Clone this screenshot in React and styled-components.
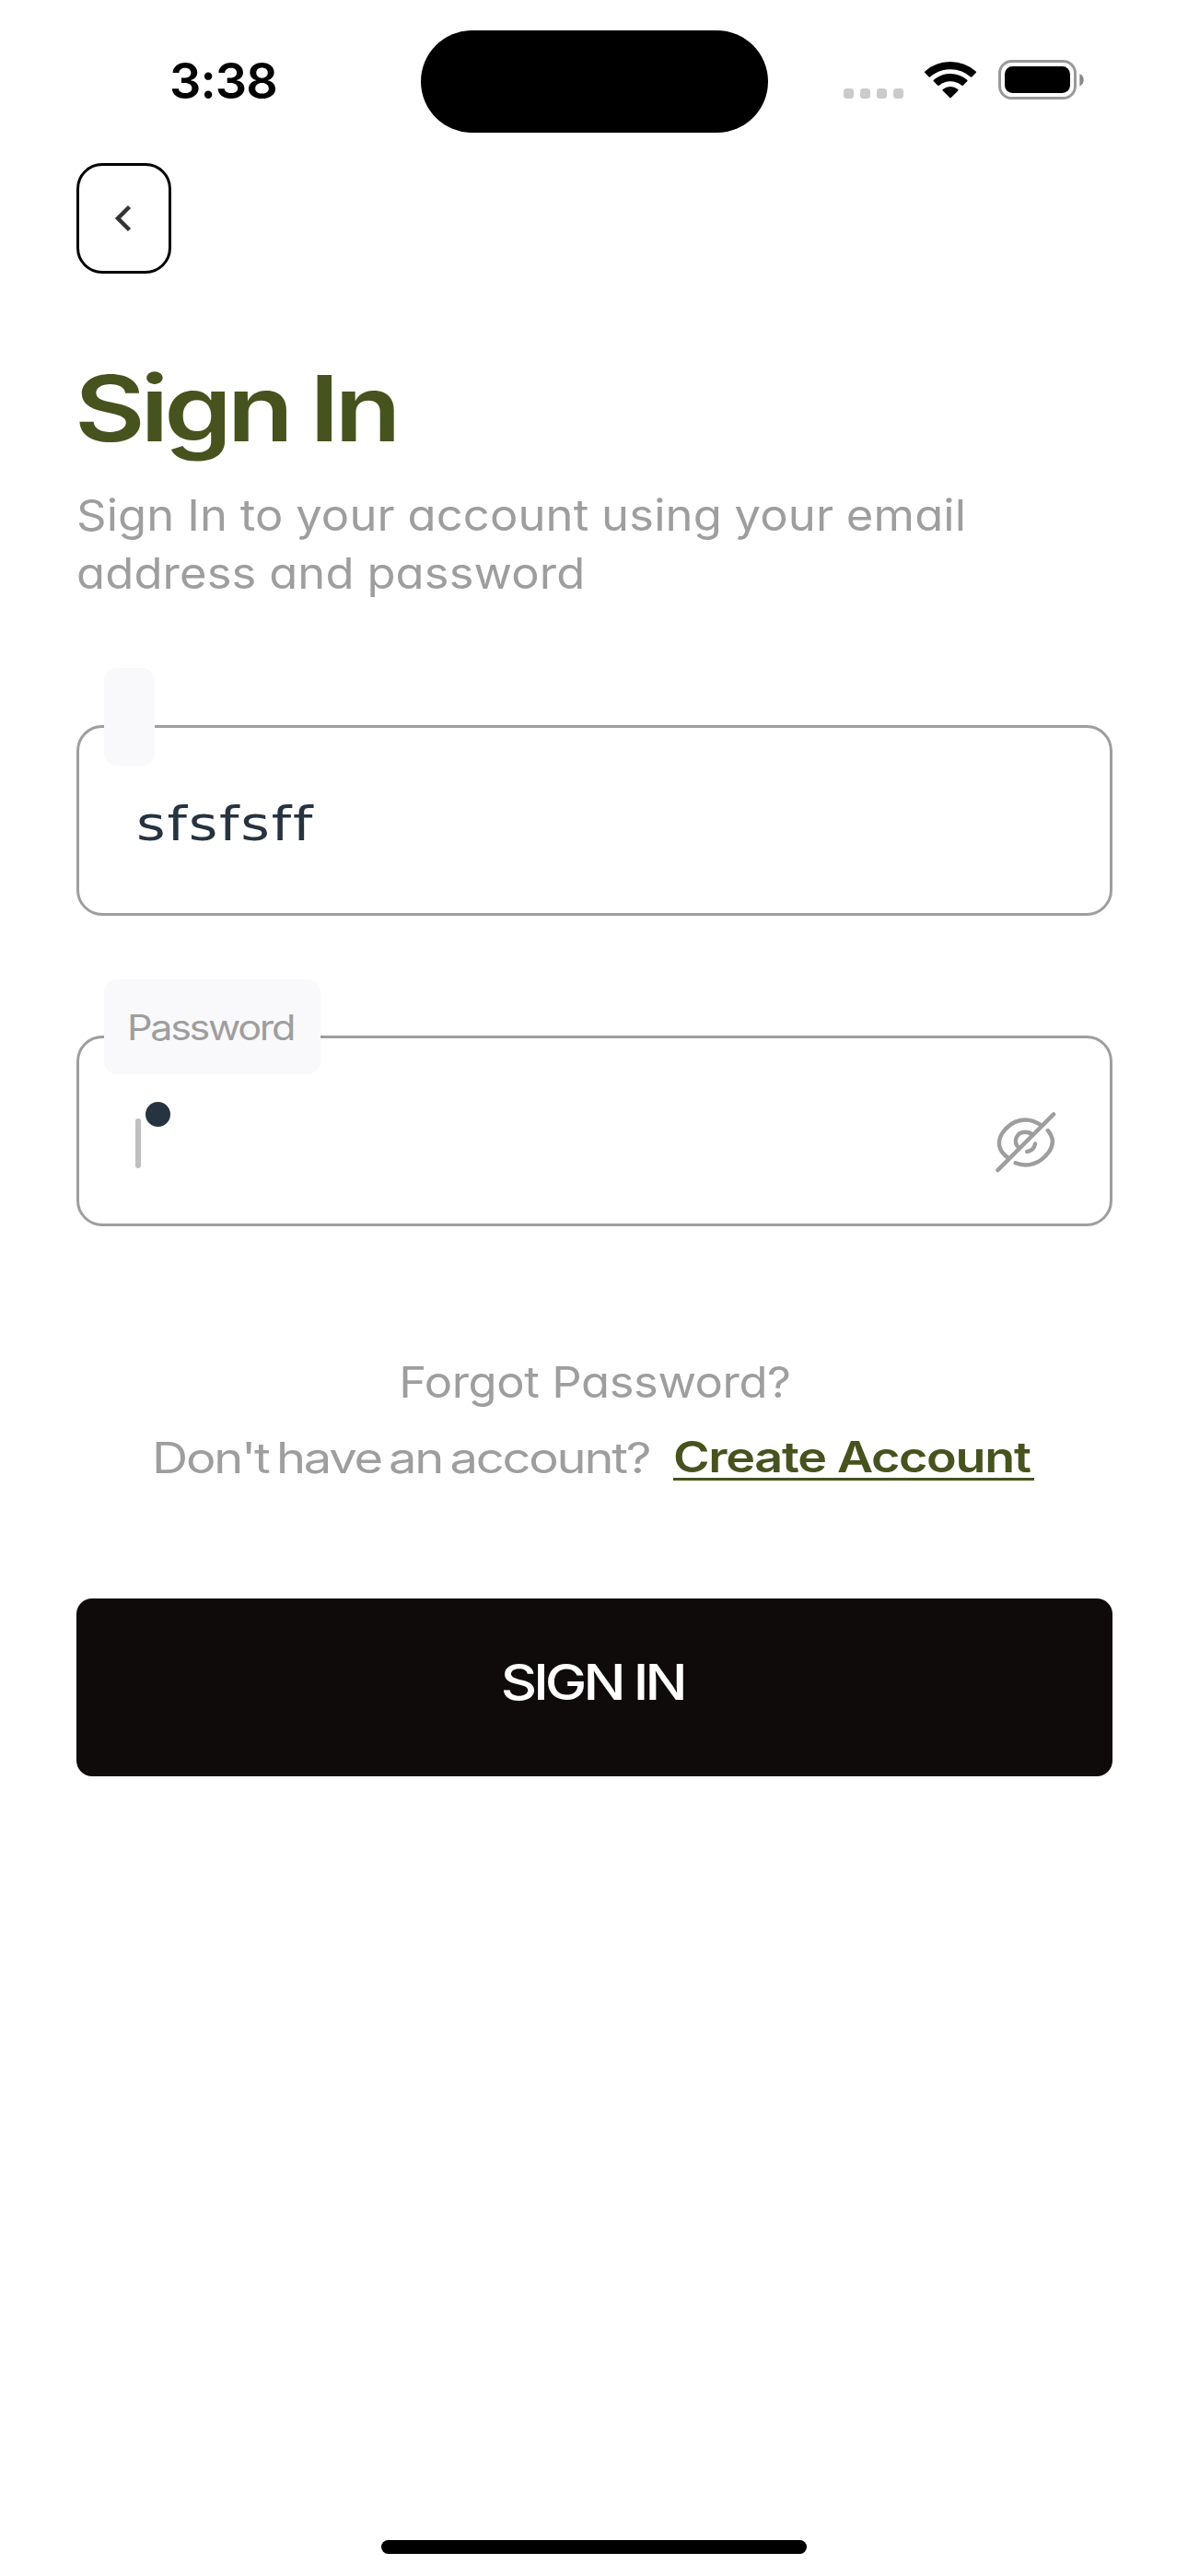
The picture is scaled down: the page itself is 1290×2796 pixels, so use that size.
import React from "react";
import styled, { createGlobalStyle } from "styled-components";

const GlobalStyle = createGlobalStyle`
  * { box-sizing: border-box; }
  html, body { margin: 0; padding: 0; background: #fff; }
  body { font-family: Inter, "Noto Sans", sans-serif; -webkit-font-smoothing: antialiased; }
  button { font: inherit; cursor: pointer; }
`;

const olive = "#46531e";
const grey = "#9e9e9e";

const Screen = styled.div`
  width: 1290px;
  height: 2796px;
  display: flex;
  flex-direction: column;
  align-items: stretch;
  background: #fff;
  overflow: hidden;
`;

const StatusBar = styled.header`
  display: grid;
  grid-template-columns: 457px 377px 1fr;
  height: 177px;
  padding-top: 33px;
`;

const Clock = styled.time`
  padding-left: 184px;
  font-size: 54px;
  font-weight: 600;
  line-height: 109px;
  letter-spacing: -0.9px;
  color: #000;
`;

const Island = styled.div`
  height: 111px;
  border-radius: 56px;
  background: #000;
`;

const Indicators = styled.div`
  display: flex;
  padding: 32px 0 0 82px;
`;

const SignalDots = styled.div`
  display: flex;
  gap: 7px;
  padding-top: 31px;
  margin-right: 22px;
`;

const SignalDot = styled.span`
  width: 11px;
  height: 11px;
  border-radius: 3.5px;
  background: #cbcbcb;
`;

const Wifi = styled.svg`
  width: 60px;
  height: 44px;
  margin-right: 21px;
`;

const Battery = styled.svg`
  width: 96px;
  height: 44px;
`;

const Content = styled.main`
  flex: 1;
  display: flex;
  flex-direction: column;
  padding: 0 82px 0 83px;
`;

const BackButton = styled.button`
  display: flex;
  align-items: center;
  justify-content: center;
  width: 103px;
  height: 120px;
  padding: 0 3px 0 0;
  border: 3px solid #000;
  border-radius: 28px;
  background: #fff;
`;

const Chevron = styled.svg`
  width: 20px;
  height: 32px;
`;

const Wide = styled.span`
  display: inline-block;
  transform: scaleX(${(p) => p.$x});
  transform-origin: ${(p) => p.$origin || "left"} center;
  letter-spacing: ${(p) => p.$spacing || 0}px;
  word-spacing: ${(p) => p.$words || 0}px;
  white-space: nowrap;
`;

const Title = styled.h1`
  margin: 86px 0 24px -2px;
  font-size: 99px;
  font-weight: 600;
  line-height: 120px;
  color: ${olive};
`;

const Muted = styled.p`
  margin: 0;
  font-size: ${(p) => (p.$round ? 47 : 46)}px;
  line-height: ${(p) => p.$line || 70}px;
  font-feature-settings: ${(p) => (p.$round ? '"cv11" 1' : "normal")};
  text-align: ${(p) => p.$align || "left"};
  white-space: nowrap;
  color: ${grey};
`;

const Form = styled.form`
  display: flex;
  flex-direction: column;
  gap: 130px;
  margin-top: 134px;
`;

const Field = styled.div`
  position: relative;
  display: flex;
  align-items: center;
  height: 207px;
  padding: 0 58px 0 61px;
  border: 3px solid ${grey};
  border-radius: 28px;
`;

const FieldLabel = styled.label`
  position: absolute;
  left: 27px;
  top: ${(p) => p.$top}px;
  width: ${(p) => p.$width}px;
  height: ${(p) => p.$height}px;
  padding-left: 25px;
  border-radius: 14px;
  background: #f9f9fb;
  font-size: 37.5px;
  line-height: ${(p) => p.$height + 3}px;
  color: ${grey};
`;

const FieldValue = styled.span`
  flex: 1;
  padding: 6px 0 0 1px;
  font-family: "DejaVu Sans", sans-serif;
  font-size: 52px;
  line-height: 66px;
  font-variant-ligatures: none;
  color: #263340;
`;

const PasswordValue = styled.span`
  flex: 1;
  display: flex;
  gap: 5px;
  height: 72px;
  margin-top: 9px;
`;

const Caret = styled.span`
  align-self: flex-end;
  width: 6px;
  height: 54px;
  border-radius: 3px;
  background: #bfbfbf;
`;

const MaskDot = styled.span`
  width: 27px;
  height: 27px;
  border-radius: 50%;
  background: #263340;
`;

const EyeIcon = styled.svg`
  width: 66px;
  height: 66px;
  margin-top: 24px;
`;

const Links = styled.section`
  display: flex;
  flex-direction: column;
  gap: 12px;
  margin-top: 134px;
`;

const SignUpRow = styled.div`
  display: grid;
  grid-template-columns: 566px 392px;
  padding-left: 82px;
  height: 70px;
`;

const CreateLink = styled.a`
  height: 60px;
  border-bottom: 3px solid ${olive};
  font-size: 46px;
  font-weight: 600;
  line-height: 69px;
  white-space: nowrap;
  color: ${olive};
`;

const SubmitButton = styled.button`
  height: 193px;
  margin-top: 118px;
  padding: 0 4px 12px 0;
  border: 0;
  border-radius: 17px;
  background: #0f0b0a;
  font-size: 53.5px;
  font-weight: 500;
  color: #fff;
`;

const HomeIndicator = styled.div`
  align-self: center;
  width: 462px;
  height: 15px;
  margin-bottom: 24px;
  border-radius: 8px;
  background: #000;
`;

function WifiIcon() {
  return (
    <Wifi viewBox="0 0 60 44" fill="#000" stroke="#000" strokeWidth="2" strokeLinejoin="round">
      <path d="M2 13.3A40.6 40.6 0 0 1 56 13.3L51.6 17.8A34 34 0 0 0 6.4 17.8Z" />
      <path d="M11.5 22.6A26.4 26.4 0 0 1 46.5 22.6L42 27A20 20 0 0 0 16 27Z" />
      <path d="M21.4 32.7A12 12 0 0 1 36.6 32.7L29 40.4Z" />
    </Wifi>
  );
}

function BatteryIcon() {
  return (
    <Battery viewBox="0 0 96 44">
      <rect x="1.5" y="1.5" width="82" height="40" rx="13" fill="none" stroke="#999" strokeWidth="3" />
      <rect x="7" y="7" width="71" height="29" rx="8.5" fill="#000" />
      <path d="M88.3 15A7.4 7.4 0 0 1 88.3 28.5Z" fill="#888" />
    </Battery>
  );
}

function EyeSlash() {
  return (
    <EyeIcon viewBox="0 0 66 66" fill="none" stroke={grey} strokeWidth="4.4" strokeLinecap="round">
      <path d="M2.4 63.1L63.1 2.4" />
      <path d="M49.3 14.2C35 4.6 18.5 7.2 7.7 22.4C2.5 29.6 2.8 38.5 7.9 44.5C9.3 46.2 11.3 48 13.4 49.6" />
      <path d="M56.8 20C64 28.6 62.9 36.4 57.8 43.6C48.6 56.4 34.8 60.5 21.6 55.3" />
      <path d="M24.9 38.6C18.6 31.6 22.8 21.8 32.3 21.8C35.6 21.8 37.9 22.9 39.5 24.4" />
      <path d="M43.1 34.4C42.2 39.2 38.8 42.2 34.2 43" />
    </EyeIcon>
  );
}

export default function App() {
  return (
    <Screen>
      <GlobalStyle />
      <StatusBar>
        <Clock>3:38</Clock>
        <Island />
        <Indicators>
          <SignalDots>
            {[0, 1, 2, 3].map((i) => (
              <SignalDot key={i} />
            ))}
          </SignalDots>
          <WifiIcon />
          <BatteryIcon />
        </Indicators>
      </StatusBar>
      <Content>
        <BackButton type="button" aria-label="Back">
          <Chevron viewBox="0 0 20 32" fill="none" stroke="#333" strokeWidth="4.5">
            <path d="M17.5 3.5L5 16L17.5 28.5" />
          </Chevron>
        </BackButton>
        <Title>
          <Wide $x={1.19} $spacing={-4.3} $words={-2}>Sign In</Wide>
        </Title>
        <Muted $line={63} $round>
          <Wide $x={1.08} $spacing={0.1} $words={-0.6}>
            Sign In to your account using your email
            <br />
            address and password
          </Wide>
        </Muted>
        <Form>
          <Field>
            <FieldLabel $top={-65} $width={55} $height={106} />
            <FieldValue>
              <Wide $x={1.17} $spacing={1.5}>sfsfsff</Wide>
            </FieldValue>
          </Field>
          <Field>
            <FieldLabel $top={-64} $width={235} $height={103}>
              <Wide $x={1.15} $spacing={-2}>Password</Wide>
            </FieldLabel>
            <PasswordValue>
              <Caret />
              <MaskDot />
            </PasswordValue>
            <EyeSlash />
          </Field>
        </Form>
        <Links>
          <Muted $align="center" $round>
            <Wide $x={1.08} $spacing={-0.4} $origin="center">Forgot Password?</Wide>
          </Muted>
          <SignUpRow>
            <Muted as="span">
              <Wide $x={1.18} $spacing={-1.9} $words={-4}>Don't have an account?</Wide>
            </Muted>
            <CreateLink>
              <Wide $x={1.17} $spacing={-1.1}>Create Account</Wide>
            </CreateLink>
          </SignUpRow>
        </Links>
        <SubmitButton type="button">
          <Wide $x={1.14} $spacing={-3.5} $origin="center">SIGN IN</Wide>
        </SubmitButton>
      </Content>
      <HomeIndicator />
    </Screen>
  );
}
